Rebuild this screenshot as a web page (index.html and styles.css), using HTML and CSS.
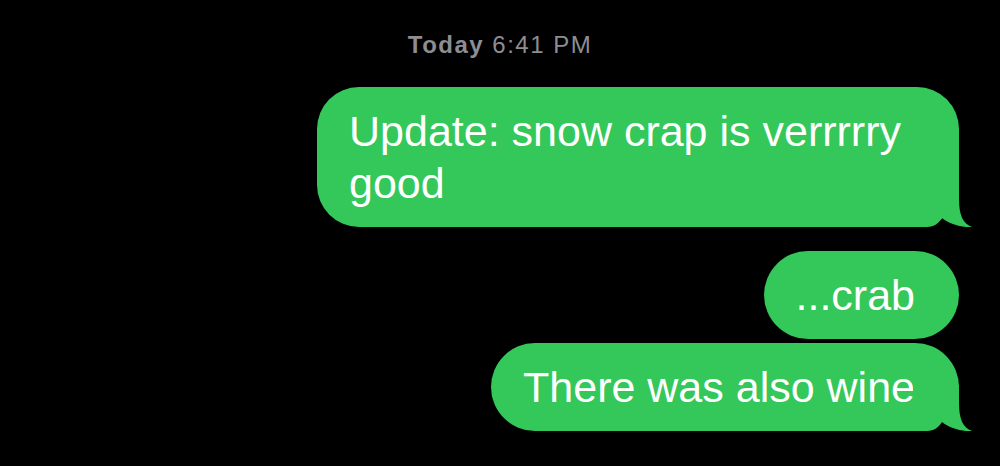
FILE: index.html
```html
<!DOCTYPE html>
<html lang="en">
<head>
  <meta charset="UTF-8">
  <title>Messages</title>
  <link rel="stylesheet" href="styles.css">
</head>
<body>

  <!-- timestamp -->
  <div class="stamp"><b>Today</b> 6:41 PM</div>

  <!-- sent messages -->
  <div class="messages">
    <div class="bubble group-end">
      Update: snow crap is verrrrry good
      <svg class="tail" viewBox="-46 -46 59 46" width="59" height="46"><path d="M-46 -46 L0 -46 L0 -28 C0 -12 4 -3 13 0 C4 1 -10 -3 -17 -9 C-20 -4 -25 0 -32 0 L-46 0 Z"/></svg>
    </div>
    <div class="bubble">...crab</div>
    <div class="bubble">
      There was also wine
      <svg class="tail" viewBox="-46 -46 59 46" width="59" height="46"><path d="M-46 -46 L0 -46 L0 -28 C0 -12 4 -3 13 0 C4 1 -10 -3 -17 -9 C-20 -4 -25 0 -32 0 L-46 0 Z"/></svg>
    </div>
  </div>

</body>
</html>
```

FILE: styles.css
```css
    body {
      margin: 0;
      background: #000;
      font-family: 'Liberation Sans', Arial, sans-serif;
      overflow: hidden;
    }

    .stamp {
      margin-top: 31px;
      text-align: center;
      font-size: 24px;
      line-height: 28px;
      letter-spacing: 1.5px;
      color: #8d8d92;
    }

    .stamp b {
      font-weight: bold;
    }

    .messages {
      display: flex;
      flex-direction: column;
      align-items: flex-end;
      gap: 4px;
      padding: 28px 41px 0 0;
    }

    .bubble {
      position: relative;
      box-sizing: border-box;
      max-width: 642px;
      padding: 18px 44px 18px 32px;
      background: #34c759;
      color: #fff;
      font-size: 43px;
      line-height: 52px;
      border-radius: 44px;
    }

    .bubble.group-end {
      margin-bottom: 20px;
      border-radius: 42px;
    }

    .tail {
      position: absolute;
      right: -13px;
      bottom: 0;
      fill: #34c759;
    }
```
